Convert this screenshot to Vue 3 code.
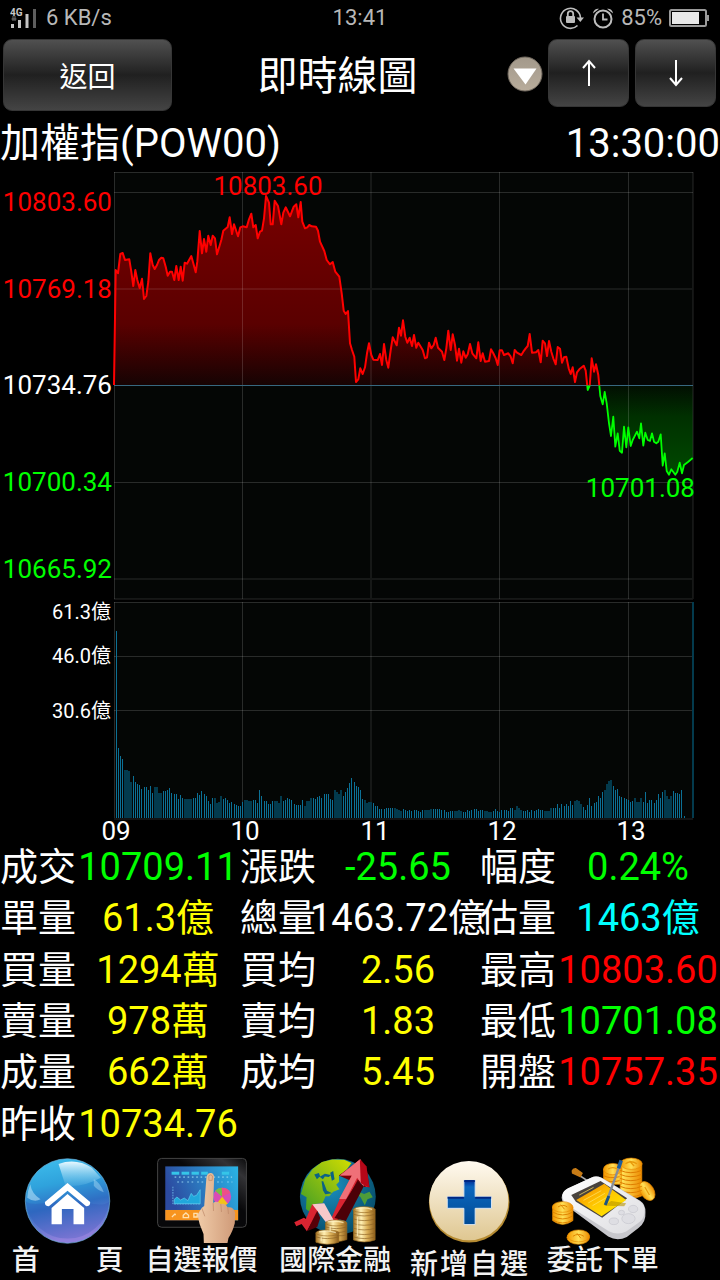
<script setup>
const stats = [
  [['成交', '10709.11', 'down'], ['漲跌', '-25.65', 'down'], ['幅度', '0.24%', 'down']],
  [['單量', '61.3億', 'amount'], ['總量', '1463.72億', 'plain'], ['估量', '1463億', 'estimate']],
  [['買量', '1294萬', 'amount'], ['買均', '2.56', 'amount'], ['最高', '10803.60', 'up']],
  [['賣量', '978萬', 'amount'], ['賣均', '1.83', 'amount'], ['最低', '10701.08', 'down']],
  [['成量', '662萬', 'amount'], ['成均', '5.45', 'amount'], ['開盤', '10757.35', 'up']],
  [['昨收', '10734.76', 'amount']],
]

const TOP = 170
const priceLabels = [
  { text: '10803.60', y: 211, tone: 'up' },
  { text: '10769.18', y: 298, tone: 'up' },
  { text: '10734.76', y: 394, tone: 'plain' },
  { text: '10700.34', y: 491, tone: 'down' },
  { text: '10665.92', y: 578, tone: 'down' },
]
const volumeLabels = [
  { text: '61.3億', y: 619 },
  { text: '46.0億', y: 663 },
  { text: '30.6億', y: 718 },
]
const hours = [
  { text: '09', x: 116 },
  { text: '10', x: 245 },
  { text: '11', x: 375 },
  { text: '12', x: 502 },
  { text: '13', x: 631 },
]

// Price samples for each part of the session, three units to one chart unit.
const sessions = [
  { x: 0, y: 165, p: '342,660 347,315 354,325 361,267 368,264 375,285 388,283 394,320 400,363 406,315 412,345 419,370 426,341 432,402 439,393 445,350 451,265 458,300 464,312 471,300 477,285 484,278 490,280 497,305 503,332 510,320 516,320 523,345 529,303 536,345 542,305 548,347 554,293 561,296 574,273 580,295 587,322 592,290 599,198 606,265 612,222 619,260 625,212 632,240 638,212 645,220 651,268 658,245' },
  { x: 220, y: 165, p: '4,225 10,197 23,186 29,157 36,207 42,178 54,214 61,187 68,184 80,187 87,163 94,146 100,187 107,180 113,220 120,200 126,197 132,160 138,93 147,113 152,178 158,178 164,107 174,123 184,178 190,143 197,127 210,154 221,125 229,118 235,157 242,111 247,170 255,190 262,187 268,180 275,184 288,185 294,197 300,230 313,258 320,285 330,298 338,291 346,320 358,335 365,385 371,437 377,447 384,438 390,535 396,555 403,575 408,651 415,643 421,610 428,627 435,607 441,565 447,535 454,570 460,584 473,585 480,567 486,600 492,537 499,585 505,608 512,555 518,517 530,541 537,488 543,512 549,466 556,515 562,533 569,518 576,543 582,510 589,548 595,533 608,555 615,580 621,577 627,533 634,550 641,540 647,518 654,548' },
  { x: 440, y: 290, p: '6,185 13,210 19,175 25,122 32,180 38,133 45,165 51,212 57,176 64,218 70,184 77,203 83,193 90,162 97,190 109,205 115,157 122,213 128,190 135,215 147,213 153,178 160,190 167,205 173,225 179,181 186,181 192,195 205,190 212,200 218,220 224,180 231,188 244,195 250,185 257,175 263,168 269,132 276,188 288,187 295,180 302,217 308,152 315,160 321,198 327,153 334,185 340,205 347,223 353,171 360,176 366,218 372,202 379,200 386,235 392,252 398,232 405,276 411,247 418,238 431,227 437,242 443,300 449,287 455,205 462,245 468,223 475,255 481,318 488,343 494,306 500,340 507,400 513,438 520,380 526,470 533,430 539,482 546,488 552,410 559,472 565,412 572,468 578,450 591,425 598,445 603,400 610,467 616,428 623,450 630,453 636,430 642,455 649,460 655,455 662,433 668,527 674,490 680,543 687,554 694,538 706,554 712,545 719,518 726,550 732,525 745,515 758,504' },
]
const line = sessions
  .flatMap((s) =>
    s.p.split(' ').map((pair) => {
      const [x, y] = pair.split(',').map(Number)
      return `${(s.x + x / 3).toFixed(1)},${(s.y + y / 3).toFixed(1)}`
    }),
  )
  .join(' ')
const area = `114,385.5 ${line} 692.7,385.5`

// Per-minute volume levels, measured down from the top of the scale (685 is zero).
const ZERO = 685
const levels = `685 123 474 498 507 542 542 544 578 560 578 582 586 598
591 591 600 590 609 591 593 610 610 603 603 602 596 609
614 614 629 615 626 627 627 629 627 624 624 609 615 603
612 618 633 642 626 626 641 636 618 627 626 632 640 636
644 646 648 648 636 630 630 634 634 632 632 640 600 619
634 634 643 643 634 633 633 641 618 635 632 624 627 632
642 645 647 647 630 648 633 633 626 626 629 622 618 626
612 612 614 627 632 600 608 614 600 618 607 594 580 564
576 588 592 602 627 632 641 636 638 641 648 650 657 659
659 656 656 656 654 654 657 660 663 659 660 664 660 664
662 660 664 668 660 662 660 661 659 657 659 657 659 660
662 668 667 663 663 664 663 662 665 668 666 662 663 660
657 659 665 661 660 663 664 666 668 663 657 665 668 660
662 660 664 654 656 660 648 654 662 663 663 662 667 662
663 662 657 662 661 663 663 663 654 656 654 642 654 643
648 643 648 633 646 633 630 634 642 652 660 647 626 648
640 636 618 626 607 600 582 574 570 588 600 598 619 622
624 629 632 636 634 624 638 636 626 636 606 640 632 632
640 631 614 624 608 600 620 627 620 603 610 609 614 600 679`
  .split(/\s+/)
  .map(Number)
const offsets = [0, 2, 4, 6, 8, 10, 12, 14, 16, 19, 21, 23, 25, 27]
const bars = levels.map((level, i) => {
  const slot = i % 14
  const wide = slot >= 5 && slot <= 8
  const height = Math.round((ZERO - level) / 3)
  return {
    x: 114 + Math.floor(i / 14) * 30 + offsets[slot],
    y: 818 - height,
    width: wide ? 2 : 1,
    height,
    fill: wide ? '#033a4d' : '#0b7096',
  }
})
</script>

<template>
  <main class="screen">
    <div class="status">
      <div class="status-side">
        <svg width="28" height="22" viewBox="0 0 28 22" aria-hidden="true">
          <text x="0" y="9" class="net">4G</text>
          <path d="M3 9v5M5 9v5M1.500 12h5" stroke="#777" stroke-width="1" fill="none" />
          <path d="M2.500 17v4M9.500 13v8M17 7v14" stroke="#c4c4c4" stroke-width="3" fill="none" />
          <path d="M24.500 2v19" stroke="#5e5e5e" stroke-width="3" />
        </svg>
        <span>6 KB/s</span>
      </div>
      <time>13:41</time>
      <div class="status-side end">
        <svg width="26" height="24" viewBox="0 0 26 24" aria-hidden="true">
          <path d="M18.500 19.500A10 10 0 1 1 21.500 12" fill="none" stroke="#bdbdbd" stroke-width="1.600" />
          <path d="M17.500 11.500h7.500l-3.700 4.500z" fill="#bdbdbd" />
          <rect x="7" y="10" width="9" height="7" rx="1" fill="#bdbdbd" />
          <path d="M8.800 10.500V7.800a2.700 2.700 0 0 1 5.400 0v2.700" fill="none" stroke="#bdbdbd" stroke-width="1.800" />
        </svg>
        <svg width="22" height="22" viewBox="0 0 22 22" aria-hidden="true">
          <circle cx="11" cy="12" r="8.500" fill="none" stroke="#bdbdbd" stroke-width="2" />
          <path d="M11 6.500v6h4.500" fill="none" stroke="#bdbdbd" stroke-width="1.800" />
          <path d="M1 6.500A5 5 0 0 1 7 1.800zM21 6.500A5 5 0 0 0 15 1.800z" fill="#bdbdbd" />
        </svg>
        <span>85%</span>
        <svg width="41" height="20" viewBox="0 0 41 20" aria-hidden="true">
          <rect x="1" y="2" width="36" height="16" rx="1.500" fill="none" stroke="#9a9a9a" stroke-width="2" />
          <path d="M39 7v6" stroke="#9a9a9a" stroke-width="2" />
          <rect x="3" y="4" width="27" height="12" fill="#e8e8e8" />
        </svg>
      </div>
    </div>

    <header class="toolbar">
      <button type="button" class="btn back">返回</button>
      <h1>即時線圖</h1>
      <button type="button" class="picker" aria-label="選單">
        <svg width="36" height="36" viewBox="0 0 36 36" aria-hidden="true">
          <defs>
            <linearGradient id="disc" x1="0" y1="0" x2="0" y2="1">
              <stop offset="0" stop-color="#a3998b" />
              <stop offset="1" stop-color="#b8ac9b" />
            </linearGradient>
          </defs>
          <circle cx="18" cy="18" r="17" fill="url(#disc)" stroke="#70685e" stroke-width="1" />
          <path d="M6.500 12.500h23L18.500 28.500z" fill="#fff" />
        </svg>
      </button>
      <button type="button" class="btn arrow" aria-label="上一檔">
        <svg width="14" height="28" viewBox="0 0 14 28" aria-hidden="true">
          <path d="M7 27V2M1 9l6-7 6 7" fill="none" stroke="#fff" stroke-width="2" />
        </svg>
      </button>
      <button type="button" class="btn arrow" aria-label="下一檔">
        <svg width="14" height="28" viewBox="0 0 14 28" aria-hidden="true">
          <path d="M7 1v25M1 19l6 7 6-7" fill="none" stroke="#fff" stroke-width="2" />
        </svg>
      </button>
    </header>

    <div class="symbol">
      <h2>加權指(POW00)</h2>
      <time>13:30:00</time>
    </div>

    <svg class="chart" :viewBox="`0 ${TOP} 720 672`" role="img" aria-label="加權指即時走勢">
      <defs>
        <linearGradient id="gain" gradientUnits="userSpaceOnUse" x1="0" y1="195" x2="0" y2="385">
          <stop offset="0" stop-color="#780000" />
          <stop offset="0.680" stop-color="#5a0000" />
          <stop offset="1" stop-color="#160303" />
        </linearGradient>
        <linearGradient id="loss" gradientUnits="userSpaceOnUse" x1="0" y1="385" x2="0" y2="475">
          <stop offset="0" stop-color="#020e02" />
          <stop offset="0.350" stop-color="#003000" />
          <stop offset="1" stop-color="#004a00" />
        </linearGradient>
        <clipPath id="above"><rect x="110" y="170" width="590" height="215.500" /></clipPath>
        <clipPath id="below"><rect x="110" y="385.500" width="590" height="214" /></clipPath>
      </defs>

      <rect x="114" y="172" width="579" height="427" fill="#040605" />
      <rect x="114" y="602" width="579" height="216" fill="#040605" />
      <polygon :points="area" fill="url(#gain)" clip-path="url(#above)" />
      <polygon :points="area" fill="url(#loss)" clip-path="url(#below)" />

      <g fill="none" stroke="#fff" stroke-opacity="0.150">
        <path d="M114 172.500H693M114 192.500H693M114 482.500H693M114.500 172V599M242.500 172V599M499.500 172V599M628.500 172V599" />
        <path d="M114 602.500H693M114 656.500H693M114 710.500H693M114.500 602V818M242.500 602V818M499.500 602V818M628.500 602V818" />
      </g>
      <g fill="none" stroke="#fff" stroke-opacity="0.075" stroke-width="2">
        <path d="M114 289H693M114 579H693M114 599H693M114 819H693M371 172V599M371 602V818M693 172V599" />
      </g>

      <path d="M114 385.500H693" stroke="#376880" />
      <polyline :points="line" class="trace" stroke="#f00" stroke-width="2" clip-path="url(#above)" />
      <polyline :points="line" class="trace" stroke="#0f0" stroke-width="1.800" clip-path="url(#below)" />

      <rect v-for="(b, i) in bars" :key="i" :x="b.x" :y="b.y" :width="b.width" :height="b.height" :fill="b.fill" />
      <rect x="692" y="602" width="2" height="216" fill="#033a4d" />

      <g class="t26">
        <text v-for="l in priceLabels" :key="l.text" x="112" :y="l.y" text-anchor="end" :class="l.tone">{{ l.text }}</text>
        <text x="268" y="195" text-anchor="middle" class="up">10803.60</text>
        <text x="695" y="497" text-anchor="end" class="down">10701.08</text>
        <text v-for="h in hours" :key="h.text" :x="h.x" y="840" text-anchor="middle" class="plain">{{ h.text }}</text>
      </g>
      <g class="t20">
        <text v-for="l in volumeLabels" :key="l.text" x="111" :y="l.y" text-anchor="end" class="plain">{{ l.text }}</text>
      </g>
    </svg>

    <table class="stats">
      <colgroup>
        <template v-for="n in 3" :key="n"><col class="name" /><col /></template>
      </colgroup>
      <tbody>
        <tr v-for="row in stats" :key="row[0][0]">
          <template v-for="cell in row" :key="cell[0]">
            <th scope="row">{{ cell[0] }}</th>
            <td :class="cell[2]"><span>{{ cell[1] }}</span></td>
          </template>
        </tr>
      </tbody>
    </table>

    <nav class="tabs">
      <a href="#home">
        <svg viewBox="5 24 402 276" aria-hidden="true">
          <defs>
            <linearGradient id="orb" x1="0" y1="0" x2="0.200" y2="1">
              <stop offset="0" stop-color="#3fc0ee" />
              <stop offset="0.350" stop-color="#2fa2dc" />
              <stop offset="0.620" stop-color="#2f6fc4" />
              <stop offset="1" stop-color="#8f80dc" />
            </linearGradient>
            <linearGradient id="orbShine" x1="0" y1="0" x2="0" y2="1">
              <stop offset="0" stop-color="#e8f8ff" />
              <stop offset="1" stop-color="#79c8ee" stop-opacity="0.200" />
            </linearGradient>
          </defs>
          <circle cx="205" cy="168" r="127" fill="url(#orb)" stroke="#6fb4e0" stroke-width="2" />
          <path d="M79 168C100 188 145 168 205 168s100 22 126 2a127 127 0 0 1-252 0z" fill="#2c4fb4" opacity="0.250" />
          <path d="M178 57Q230 38 278 68L305 98Q250 128 199 122Z" fill="url(#orbShine)" />
          <path d="M93 118Q84 140 84 158Q105 174 124 163Q98 148 93 118z" fill="#bfe6fa" opacity="0.550" />
          <path d="M284 102q20 12 30 40q-20-8-30-20z" fill="#bfe6fa" opacity="0.400" />
          <path d="M205 114L137 171Q136 184 149 184L205 137L261 184Q274 184 273 171Z" fill="#fff" />
          <path d="M205 147L157 189V238H188V192H223V238H255V189Z" fill="#fff" />
        </svg>
        <span class="caption">首頁</span>
      </a>
      <a href="#quotes">
        <svg viewBox="403 24 402 276" aria-hidden="true">
          <defs>
            <linearGradient id="frame" x1="0" y1="1" x2="1" y2="0">
              <stop offset="0.600" stop-color="#08080a" />
              <stop offset="0.850" stop-color="#333336" />
              <stop offset="1" stop-color="#0b0b0c" />
            </linearGradient>
            <linearGradient id="panel" x1="0" y1="0.300" x2="1" y2="0">
              <stop offset="0" stop-color="#2c4aa0" />
              <stop offset="1" stop-color="#2ab5e6" />
            </linearGradient>
            <linearGradient id="skin" x1="0" y1="0" x2="1" y2="0">
              <stop offset="0" stop-color="#f0cba8" />
              <stop offset="1" stop-color="#cf9a78" />
            </linearGradient>
          </defs>
          <rect x="471" y="40" width="267" height="207" rx="12" fill="url(#frame)" stroke="#444" stroke-width="3" />
          <rect x="494" y="64" width="219" height="162" fill="url(#panel)" />
          <rect x="494" y="195" width="219" height="31" fill="#f7941e" />
          <g fill="#35c5e8">
            <rect x="513" y="80" width="23" height="9" /><rect x="543" y="80" width="23" height="9" /><rect x="573" y="80" width="22" height="9" /><rect x="602" y="80" width="20" height="9" /><rect x="664" y="80" width="22" height="9" />
          </g>
          <path d="M522 96H695M530 111h18M560 111h18M590 111h18M650 111h16M680 111h16" stroke="#9ddcf4" stroke-width="5" stroke-dasharray="5 8" fill="none" opacity="0.600" />
          <path d="M517 125v52h85" stroke="#66aee0" stroke-width="3" stroke-dasharray="5 3" fill="none" />
          <path d="M521 176V163L529 156L540 165L551 159L562 167L572 145L579 154L588 151L599 134V176Z" fill="#20a8dc" stroke="#62cff0" stroke-width="2" />
          <circle cx="665" cy="155" r="27" fill="#d94bb6" />
          <path d="M665 155L644 137A27 27 0 0 1 664 128z" fill="#74c043" />
          <path d="M665 155L690 143A27 27 0 0 0 664 128z" fill="#ee4f87" />
          <path d="M665 155L682 176A27 27 0 0 1 648 176z" fill="#f2c318" />
          <path d="M514 216l10-10M524 206v5M548 211l8-7 8 7v7h-16zM580 205h10v11h-10z" fill="none" stroke="#ffe0ae" stroke-width="4" />
          <path d="M618 94Q623 82 632 84Q641 86 641 98L638 174Q649 166 661 177Q675 173 681 187Q700 184 704 204L703 235Q696 262 684 279L681 294H610L609 267Q595 238 591 209Q597 198 604 188L611 183Z" fill="url(#skin)" />
          <path d="M625 92q6-6 11 1l-1 13h-10zM638 174l1 24M661 177l2 24M682 187l2 20M604 190l9 24" fill="none" stroke="#bd8767" stroke-width="2" />
        </svg>
        <span class="caption">自選報價</span>
      </a>
      <a href="#markets">
        <svg viewBox="11 24 402 276" aria-hidden="true">
          <defs>
            <radialGradient id="sea" cx="0.400" cy="0.350" r="0.650">
              <stop offset="0" stop-color="#1a8fc0" />
              <stop offset="1" stop-color="#07506e" />
            </radialGradient>
            <linearGradient id="land" x1="1" y1="0" x2="0" y2="1">
              <stop offset="0" stop-color="#d2dd00" />
              <stop offset="1" stop-color="#3e9c26" />
            </linearGradient>
            <linearGradient id="gold" x1="0" y1="0" x2="1" y2="0">
              <stop offset="0" stop-color="#a87422" />
              <stop offset="0.350" stop-color="#fff0b4" />
              <stop offset="0.650" stop-color="#d9ad55" />
              <stop offset="1" stop-color="#8c5c19" />
            </linearGradient>
          </defs>
          <circle cx="221" cy="155" r="114" fill="url(#sea)" />
          <path d="M123 103L145 72L173 51L204 43L240 44L262 54L247 74L224 94L225 110L216 119L226 133L207 140L195 154L184 154L175 174L155 177L138 202L125 192L127 157L110 147Z" fill="url(#land)" />
          <path d="M150 88l14-4 4 10 14-8 18 4-6 6-12-2-6 9-10-8-8 8zM198 83l9-5 4 25-8 4zM172 109l5 0 11 28 16 8-21 3-7-12z" fill="#0b6285" />
          <path d="M276 137l24 10 16-7 10 17-16 6-8 18-13-25-13-8z" fill="#4e9c39" />
          <path d="M290 43L307 64L316 126L299 126L290 111L240 216L209 231L204 222L263 109L224 91Z" fill="#770008" />
          <path d="M287 43L227 91L263 91L225 166L199 226L172 176L144 178L125 222L119 218L90 232L96 244L112 237L128 259L165 193L213 239L246 172L281 103L306 126L315 126Z" fill="#d92431" />
          <path d="M287 43L227 91L263 91L225 162L246 162L279 98L299 126L290 43Z" fill="#ef7078" />
          <path d="M287 43L290 115L316 128L307 64Z" fill="#b50718" />
          <path d="M281 108l18 16-54 104-34-9z" fill="#4c0007" />
          <path d="M144 178l36-3 28 50-20 11z" fill="#f7c9ca" />
          <path d="M128 259l31-62 9 22-9 27z" fill="#560008" />
          <g fill="url(#gold)" stroke="#9a6c24" stroke-width="2">
            <path d="M184 234v50q32 12 64 0v-50z" /><path d="M268 194v91q32 12 65 0v-91z" /><path d="M155 264v28q34 12 69 0v-28z" />
            <ellipse cx="216" cy="234" rx="32" ry="9" /><ellipse cx="300" cy="194" rx="33" ry="9" /><ellipse cx="190" cy="264" rx="35" ry="9" />
          </g>
          <g fill="none" stroke="#8d6224" stroke-width="2">
            <path d="M184 246q32 10 64 0M184 258q32 10 64 0M218 272q16 2 30-2M268 208q32 10 65 0M268 222q32 10 65 0M268 236q32 10 65 0M268 250q32 10 65 0M268 264q32 10 65 0M268 276q32 10 65 0M155 276q34 10 69 0" />
          </g>
          <path d="M190 231q24-5 48 2M275 191q24-5 49 2M164 261q25-5 51 2M280 215v58M198 244v18M171 277v12" fill="none" stroke="#fff3c4" stroke-width="4" opacity="0.700" />
        </svg>
        <span class="caption">國際金融</span>
      </a>
      <a href="#add" class="loose">
        <svg viewBox="411 24 402 276" aria-hidden="true">
          <defs>
            <linearGradient id="cream" x1="0" y1="0" x2="0" y2="1">
              <stop offset="0" stop-color="#fffaf0" />
              <stop offset="1" stop-color="#dfc791" />
            </linearGradient>
            <linearGradient id="cross" x1="0" y1="0" x2="0" y2="1">
              <stop offset="0" stop-color="#002d98" />
              <stop offset="0.150" stop-color="#0b66bd" />
              <stop offset="1" stop-color="#004b96" />
            </linearGradient>
          </defs>
          <circle cx="613" cy="172" r="121" fill="#b58b32" />
          <circle cx="612" cy="167" r="119" fill="url(#cream)" />
          <path d="M597 106h34v49h49v35h-49v49h-34v-49h-50v-35h50z" fill="url(#cross)" stroke="#dce6ef" stroke-width="3" />
          <path d="M598 108h32M548 158h49M631 158h48" stroke="#002783" stroke-width="6" />
        </svg>
        <span class="caption">新增自選</span>
      </a>
      <a href="#order">
        <svg viewBox="105 24 402 276" aria-hidden="true">
          <defs>
            <linearGradient id="coin" x1="0" y1="0" x2="1" y2="0">
              <stop offset="0" stop-color="#f39800" />
              <stop offset="0.500" stop-color="#ffe056" />
              <stop offset="1" stop-color="#ed8b00" />
            </linearGradient>
            <linearGradient id="lcd" x1="0" y1="0" x2="1" y2="1">
              <stop offset="0" stop-color="#ef7f00" />
              <stop offset="0.500" stop-color="#ffc800" />
              <stop offset="1" stop-color="#fff000" />
            </linearGradient>
            <linearGradient id="shell" x1="0" y1="0" x2="1" y2="1">
              <stop offset="0" stop-color="#fff" />
              <stop offset="1" stop-color="#dcdce0" />
            </linearGradient>
          </defs>
          <g fill="url(#coin)" stroke="#e88b00" stroke-width="2">
            <path d="M308 72v46h54V72zM358 55v98q32 14 65 0V55z" />
            <ellipse cx="336" cy="72" rx="28" ry="17" /><ellipse cx="391" cy="56" rx="33" ry="17" />
            <ellipse cx="439" cy="138" rx="20" ry="31" transform="rotate(-32 439 138)" />
          </g>
          <path d="M358 76q32 14 65 0M358 88q32 14 65 0M358 100q32 14 65 0M358 112q32 14 65 0M358 124q32 14 65 0M358 136q32 14 65 0M358 148q32 14 65 0M308 92q20 10 48 3M308 104q20 10 48 3" fill="none" stroke="#df7d00" stroke-width="3" />
          <path d="M374 56q16-12 34 0M386 48l14 15M322 72q14-9 27 0M432 126l14 24" fill="none" stroke="#e99a0b" stroke-width="4" />
          <path d="M240 94l24 16" stroke="#aaa" stroke-width="5" />
          <path d="M212 77q3-9 13-8l21 15-7 13-26-12z" fill="#c77b16" />
          <path d="M182 158Q184 140 199 132L270 98Q286 90 303 98L418 167Q435 178 434 202Q436 233 413 249L378 276Q350 290 322 275L207 190Q184 178 182 158z" fill="#c7c7cc" />
          <path d="M184 151Q186 138 201 130L271 98Q286 91 302 99L416 168Q434 180 431 203Q429 224 411 235L376 260Q350 272 324 259L203 182Q184 170 184 151z" fill="url(#shell)" />
          <path d="M211 150L299 108L379 160L304 218L225 170z" fill="#48423d" />
          <path d="M226 165L310 116L376 165L302 214z" fill="url(#lcd)" />
          <path d="M235 150l43-23M248 166l53-29M262 174l50-29M275 182l48-28" stroke="#ffe56a" stroke-width="3" opacity="0.700" />
          <path d="M310 182l60 2 6-9-45-7z" fill="#b89500" opacity="0.600" />
          <g fill="#dedee3" stroke="#c6c6cd" stroke-width="2">
            <ellipse cx="397" cy="192" rx="14" ry="11" /><ellipse cx="362" cy="203" rx="9" ry="7" /><ellipse cx="339" cy="229" rx="14" ry="10" /><ellipse cx="383" cy="221" rx="20" ry="15" />
          </g>
          <path d="M356 62L316 174" stroke="#858d99" stroke-width="7" />
          <path d="M361 46l-8 24" stroke="#1b5d9e" stroke-width="11" />
          <path d="M324 153l-11 27" stroke="#1a5582" stroke-width="9" />
          <g fill="url(#coin)" stroke="#e88b00" stroke-width="2">
            <path d="M155 186v41q30 23 61 0v-41z" /><ellipse cx="185" cy="186" rx="31" ry="16" />
            <ellipse cx="232" cy="278" rx="34" ry="20" /><ellipse cx="233" cy="273" rx="33" ry="18" />
          </g>
          <path d="M155 201q30 18 61 0M155 213q30 18 61 0M155 225q30 18 61 0M171 186q15-10 28 0M179 179l12 14M216 274q16-11 33 0M228 265l12 15" fill="none" stroke="#df8500" stroke-width="3" />
        </svg>
        <span class="caption">委託下單</span>
      </a>
    </nav>
  </main>
</template>

<style>
body {
  background: #000;
}
</style>

<style scoped>
.screen {
  min-height: 100vh;
  overflow: hidden;
  background: #000;
  color: #fff;
  font-family: Roboto, "Noto Sans CJK TC", sans-serif;
}
.status {
  display: grid;
  grid-template-columns: 1fr auto 1fr;
  align-items: center;
  height: 36px;
  padding: 0 10px;
  color: #b8b8b8;
  font-size: 22px;
  line-height: 36px;
}
.status-side {
  display: flex;
  align-items: center;
  gap: 8px;
}
.end {
  gap: 7px;
  justify-content: flex-end;
}
.net {
  fill: #c8c8c8;
  font-size: 10px;
  font-weight: 700;
}
.toolbar {
  display: flex;
  align-items: flex-start;
  gap: 6px;
  box-sizing: border-box;
  height: 78px;
  padding: 3px 4px 3px 3px;
}
button {
  margin: 0;
  padding: 0;
  color: inherit;
  font-family: inherit;
  cursor: pointer;
}
.btn {
  display: flex;
  align-items: center;
  justify-content: center;
  border: 1px solid #363636;
  border-radius: 9px;
  background: linear-gradient(#505050, #202020 50%, #444);
}
.back {
  width: 169px;
  height: 72px;
  font-size: 28px;
}
.arrow {
  width: 81px;
  height: 68px;
}
.picker {
  display: flex;
  align-items: center;
  height: 70px;
  border: 0;
  background: none;
  margin-right: -1px;
}
h1 {
  flex: 1;
  margin: 0;
  padding-right: 4px;
  font-size: 40px;
  font-weight: 400;
  line-height: 76px;
  text-align: center;
}
.symbol {
  display: flex;
  justify-content: space-between;
  height: 56px;
  font-size: 40px;
  line-height: 60px;
}
h2 {
  margin: 0;
  font-size: inherit;
  font-weight: 400;
}
.chart {
  display: block;
  width: 100%;
  overflow: visible;
}
.trace {
  fill: none;
  stroke-linejoin: round;
}
.t26 {
  font-size: 26px;
}
.t20 {
  font-size: 20px;
}
.up {
  color: #f00;
  fill: #f00;
}
.down {
  color: #0f0;
  fill: #0f0;
}
.plain {
  color: #fff;
  fill: #fff;
}
.amount {
  color: #ff0;
}
.estimate {
  color: #0ff;
}
.stats {
  width: 100%;
  height: 308px;
  border-collapse: collapse;
  table-layout: fixed;
  font-size: 38px;
  line-height: 51px;
  white-space: nowrap;
}
.name {
  width: 76px;
}
th,
td {
  padding: 0;
  font-weight: 400;
  text-align: left;
}
td span {
  display: flex;
  justify-content: center;
}
.tabs {
  display: grid;
  grid-template-columns: repeat(5, 1fr);
  padding: 3px 7% 0 1px;
}
.tabs a {
  display: flex;
  flex-direction: column;
  align-items: center;
  color: #f2f2f2;
  text-decoration: none;
}
.tabs svg {
  display: block;
  width: 100%;
  height: 92px;
}
.caption {
  width: 112px;
  font-size: 28px;
  font-weight: 500;
  line-height: 32px;
  text-align: justify;
  text-align-last: justify;
}
.loose .caption {
  width: 118px;
  padding-top: 5px;
  line-height: 30px;
}
</style>
